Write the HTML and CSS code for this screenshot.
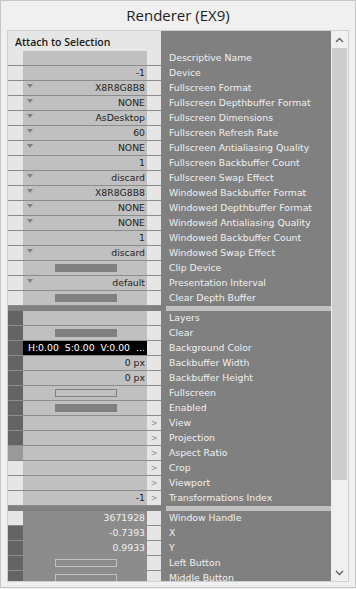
FILE: index.html
```html
<!DOCTYPE html>
<html>
<head>
<meta charset="UTF-8">
<title>Renderer (EX9)</title>
<link rel="stylesheet" href="styles.css">
</head>
<body>
	<div class="window">
		<div class="title">Renderer (EX9)</div>
		<div class="panel">
			<div class="list">
				<div class="head">
					<div class="head-l">Attach to Selection</div>
					<div class="head-r"></div>
				</div>

				<!-- 설정 핀 -->
				<div class="row"><span class="pin"></span><span class="val"></span><span class="act"></span><span class="name">Descriptive Name</span></div>
				<div class="row"><span class="pin"></span><span class="val">-1</span><span class="act"></span><span class="name">Device</span></div>
				<div class="row"><span class="pin"></span><span class="val"><i class="drop"></i>X8R8G8B8</span><span class="act"></span><span class="name">Fullscreen Format</span></div>
				<div class="row"><span class="pin"></span><span class="val"><i class="drop"></i>NONE</span><span class="act"></span><span class="name">Fullscreen Depthbuffer Format</span></div>
				<div class="row"><span class="pin"></span><span class="val"><i class="drop"></i>AsDesktop</span><span class="act"></span><span class="name">Fullscreen Dimensions</span></div>
				<div class="row"><span class="pin"></span><span class="val"><i class="drop"></i>60</span><span class="act"></span><span class="name">Fullscreen Refresh Rate</span></div>
				<div class="row"><span class="pin"></span><span class="val"><i class="drop"></i>NONE</span><span class="act"></span><span class="name">Fullscreen Antialiasing Quality</span></div>
				<div class="row"><span class="pin"></span><span class="val">1</span><span class="act"></span><span class="name">Fullscreen Backbuffer Count</span></div>
				<div class="row"><span class="pin"></span><span class="val"><i class="drop"></i>discard</span><span class="act"></span><span class="name">Fullscreen Swap Effect</span></div>
				<div class="row"><span class="pin"></span><span class="val"><i class="drop"></i>X8R8G8B8</span><span class="act"></span><span class="name">Windowed Backbuffer Format</span></div>
				<div class="row"><span class="pin"></span><span class="val"><i class="drop"></i>NONE</span><span class="act"></span><span class="name">Windowed Depthbuffer Format</span></div>
				<div class="row"><span class="pin"></span><span class="val"><i class="drop"></i>NONE</span><span class="act"></span><span class="name">Windowed Antialiasing Quality</span></div>
				<div class="row"><span class="pin"></span><span class="val">1</span><span class="act"></span><span class="name">Windowed Backbuffer Count</span></div>
				<div class="row"><span class="pin"></span><span class="val"><i class="drop"></i>discard</span><span class="act"></span><span class="name">Windowed Swap Effect</span></div>
				<div class="row"><span class="pin"></span><span class="val center"><b class="bool on"></b></span><span class="act"></span><span class="name">Clip Device</span></div>
				<div class="row"><span class="pin"></span><span class="val"><i class="drop"></i>default</span><span class="act"></span><span class="name">Presentation Interval</span></div>
				<div class="row"><span class="pin"></span><span class="val center"><b class="bool on"></b></span><span class="act"></span><span class="name">Clear Depth Buffer</span></div>

				<div class="sep"><span class="sep-l"></span><span class="sep-r"></span></div>

				<!-- 입력 핀 -->
				<div class="row"><span class="pin dark"></span><span class="val"></span><span class="act"></span><span class="name">Layers</span></div>
				<div class="row"><span class="pin dark"></span><span class="val center"><b class="bool on"></b></span><span class="act"></span><span class="name">Clear</span></div>
				<div class="row"><span class="pin dark"></span><span class="val color"><span>H:0.00</span><span>S:0.00</span><span>V:0.00</span><span>...</span></span><span class="act"></span><span class="name">Background Color</span></div>
				<div class="row"><span class="pin dark"></span><span class="val">0 px</span><span class="act"></span><span class="name">Backbuffer Width</span></div>
				<div class="row"><span class="pin dark"></span><span class="val">0 px</span><span class="act"></span><span class="name">Backbuffer Height</span></div>
				<div class="row"><span class="pin dark"></span><span class="val center"><b class="bool"></b></span><span class="act"></span><span class="name">Fullscreen</span></div>
				<div class="row"><span class="pin dark"></span><span class="val center"><b class="bool on"></b></span><span class="act"></span><span class="name">Enabled</span></div>
				<div class="row"><span class="pin dark"></span><span class="val"></span><span class="act">&gt;</span><span class="name">View</span></div>
				<div class="row"><span class="pin dark"></span><span class="val"></span><span class="act">&gt;</span><span class="name">Projection</span></div>
				<div class="row"><span class="pin mid"></span><span class="val"></span><span class="act">&gt;</span><span class="name">Aspect Ratio</span></div>
				<div class="row"><span class="pin"></span><span class="val"></span><span class="act">&gt;</span><span class="name">Crop</span></div>
				<div class="row"><span class="pin"></span><span class="val"></span><span class="act">&gt;</span><span class="name">Viewport</span></div>
				<div class="row"><span class="pin"></span><span class="val">-1</span><span class="act">&gt;</span><span class="name">Transformations Index</span></div>

				<div class="sep"><span class="sep-l"></span><span class="sep-r"></span></div>

				<!-- 출력 핀 -->
				<div class="row out"><span class="pin"></span><span class="val">3671928</span><span class="act"></span><span class="name">Window Handle</span></div>
				<div class="row out"><span class="pin dark"></span><span class="val">-0.7393</span><span class="act"></span><span class="name">X</span></div>
				<div class="row out"><span class="pin dark"></span><span class="val">0.9933</span><span class="act"></span><span class="name">Y</span></div>
				<div class="row out"><span class="pin dark"></span><span class="val center"><b class="bool"></b></span><span class="act"></span><span class="name">Left Button</span></div>
				<div class="row out"><span class="pin dark"></span><span class="val center"><b class="bool"></b></span><span class="act"></span><span class="name">Middle Button</span></div>
			</div>
			<div class="scroll">
				<div class="arrow">
					<svg width="9" height="6" viewBox="0 0 9 6"><polyline points="1,5 4.5,1.5 8,5" fill="none" stroke="#606060" stroke-width="1.4"/></svg>
				</div>
				<div class="track"><div class="thumb"></div></div>
				<div class="arrow">
					<svg width="9" height="6" viewBox="0 0 9 6"><polyline points="1,1 4.5,4.5 8,1" fill="none" stroke="#606060" stroke-width="1.4"/></svg>
				</div>
			</div>
		</div>
	</div>
</body>
</html>
```

FILE: styles.css
```css
* {
	box-sizing: border-box;
}

body {
	margin: 0;
	background: #f0f0f0;
}

.window {
	width: 356px;
	height: 588px;
	border: 1px solid #c6c6c6;
	background: #f0f0f0;
}

.title {
	height: 29px;
	text-align: center;
	font-family: "Open Sans", sans-serif;
	font-size: 15px;
	line-height: 29px;
	color: #1e1e1e;
}

.panel {
	display: flex;
	width: 342px;
	height: 552px;
	margin-left: 6px;
	border: 1px solid #d0d0d0;
	overflow: hidden;
}

.list {
	width: 323px;
	height: 550px;
	overflow: hidden;
	font-family: "DejaVu Sans", sans-serif;
	font-size: 9.3px;
}

.head {
	display: flex;
	height: 20px;
}

.head-l {
	width: 153px;
	background: #e6e6e6;
	padding: 5px 0 0 7px;
	font-family: "Open Sans", sans-serif;
	font-size: 10.5px;
	font-weight: 600;
	color: #1a1a1a;
	line-height: 12px;
}

.head-r {
	width: 170px;
	background: #808080;
}

.row {
	display: flex;
	height: 15px;
}

.pin, .val, .act {
	height: 15px;
	border-bottom: 1px solid #8c8c8c;
}

.pin {
	width: 15px;
	background: #e6e6e6;
}

.pin.dark {
	background: #646464;
}

.pin.mid {
	background: #9a9a9a;
}

.val {
	width: 124px;
	background: #c0c0c0;
	display: flex;
	align-items: center;
	justify-content: flex-end;
	padding: 0 2px 0 4px;
	color: #1e1e1e;
	line-height: 14px;
	white-space: nowrap;
}

.val.center {
	justify-content: center;
}

.val.color {
	background: #000;
	color: #fff;
	justify-content: flex-start;
	gap: 6px;
	padding-left: 5px;
}

.drop {
	align-self: flex-start;
	margin: 3px auto 0 0;
	width: 0;
	height: 0;
	border-left: 3px solid transparent;
	border-right: 3px solid transparent;
	border-top: 4px solid #808080;
}

.bool {
	display: block;
	width: 62px;
	height: 8px;
	border: 1px solid #808080;
}

.bool.on {
	background: #808080;
}

.act {
	width: 14px;
	background: #e6e6e6;
	color: #8c8c8c;
	font-size: 8px;
	line-height: 16px;
	text-align: center;
}

.name {
	width: 170px;
	background: #808080;
	color: #f0f0f0;
	padding-left: 8px;
	line-height: 14px;
	white-space: nowrap;
}

.row.out .val {
	background: #8c8c8c;
	color: #f0f0f0;
}

.row.out .bool {
	border-color: #c0c0c0;
}

.sep {
	display: flex;
	height: 5px;
}

.sep-l {
	width: 158px;
	background: #808080;
}

.sep-r {
	width: 165px;
	background: #c0c0c0;
}

.scroll {
	width: 17px;
	height: 550px;
	display: flex;
	flex-direction: column;
	background: #f0f0f0;
}

.arrow {
	height: 17px;
	display: flex;
	align-items: center;
	justify-content: center;
}

.track {
	flex: 1;
	padding: 0 1px;
}

.thumb {
	height: 432px;
	background: #cdcdcd;
}
```
